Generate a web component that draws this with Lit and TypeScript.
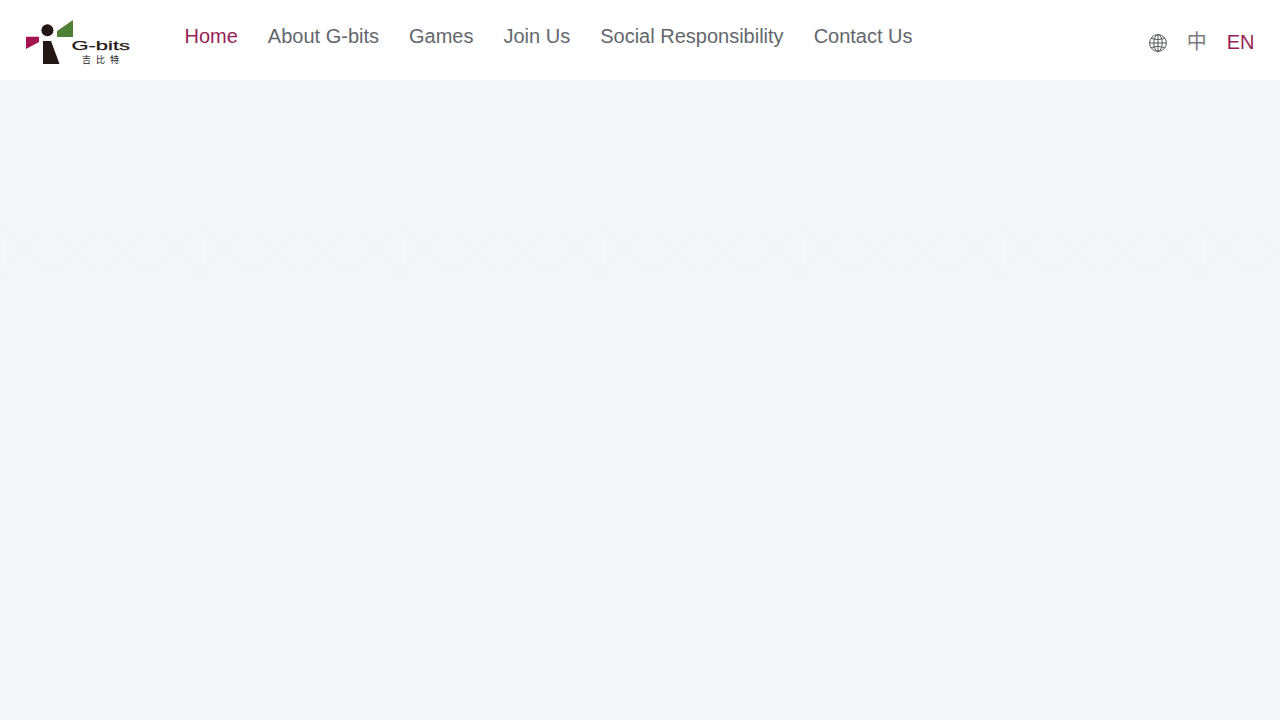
import { LitElement, html, css, svg } from "lit";
import { customElement } from "lit/decorators.js";

const cells = Array.from({ length: 26 }, (_, i) => i * 50);

@customElement("app-root")
export class AppRoot extends LitElement {
  static styles = css`
    :host { display: block; height: 720px; background: #f5f6f8; font-family: "Liberation Sans", "Noto Sans CJK SC", sans-serif; overflow: hidden; }
    .header { height: 80px; background: #fff; display: flex; align-items: flex-start; }
    .logo { display: block; margin: 18px 0 0 24px; width: 110px; height: 50px; flex: none; }
    .wm { font-family: "Liberation Sans", sans-serif; font-size: 13px; fill: #231815; stroke: #231815; stroke-width: 0.25; }
    .cn { font-family: "Noto Sans CJK SC", sans-serif; font-size: 9px; fill: #231815; letter-spacing: 5px; }
    nav { display: flex; gap: 30px; margin: 24px 0 0 50.5px; font-size: 20px; line-height: 24px; color: #63676d; }
    .active { color: #971f55; }
    .lang { margin-left: auto; margin-top: 29px; padding-right: 25.5px; display: flex; align-items: center; gap: 20px; font-size: 20px; line-height: 24px; color: #63676d; }
    .zh { color: #787b80; padding-top: 1px; }
    .globe { display: block; width: 18px; height: 18px; margin-top: 3px; }
    .band { display: block; width: 1280px; height: 54px; margin-top: 143px; }
  `;

  render() {
    return html`
      <div class="header">
        <svg class="logo" viewBox="0 0 110 50">
          <polygon points="2,18.7 15,18.7 15,24 2,31" fill="#a5134f"></polygon>
          <polygon points="33,19 49,19 49,2 33,13" fill="#4f8035"></polygon>
          <circle cx="23.4" cy="12.3" r="6" fill="#231815"></circle>
          <polygon points="19,23 27,23 35.5,46 19,46" fill="#231815"></polygon>
          <text class="wm" x="47.5" y="32" textLength="58.5" lengthAdjust="spacingAndGlyphs">G-bits</text>
          <text class="cn" x="58" y="45">吉比特</text>
        </svg>
        <nav>
          <span class="active">Home</span>
          <span>About G-bits</span>
          <span>Games</span>
          <span>Join Us</span>
          <span>Social Responsibility</span>
          <span>Contact Us</span>
        </nav>
        <div class="lang">
          <svg class="globe" viewBox="0 0 18 18" fill="none" stroke="#55585c" stroke-width="1">
            <circle cx="9" cy="9" r="8.4"></circle>
            <ellipse cx="9" cy="9" rx="4.2" ry="8.4"></ellipse>
            <path d="M9 .6V17.4M.6 9H17.4M2 4.4Q9 7 16 4.4M2 13.6Q9 11 16 13.6"></path>
          </svg>
          <span class="zh">中</span>
          <span class="active">EN</span>
        </div>
      </div>
      <svg class="band" viewBox="0 0 1280 54" fill="none" stroke="#f3f4f6" stroke-width="1.4">
        <path d="M0 2.5H1280M0 52.5H1280"></path>
        ${cells.map(
          (x) => svg`<path d="M${x} 2V52M${x} 2L${x + 50} 52M${x + 50} 2L${x} 52"></path>`
        )}
      </svg>
    `;
  }
}
